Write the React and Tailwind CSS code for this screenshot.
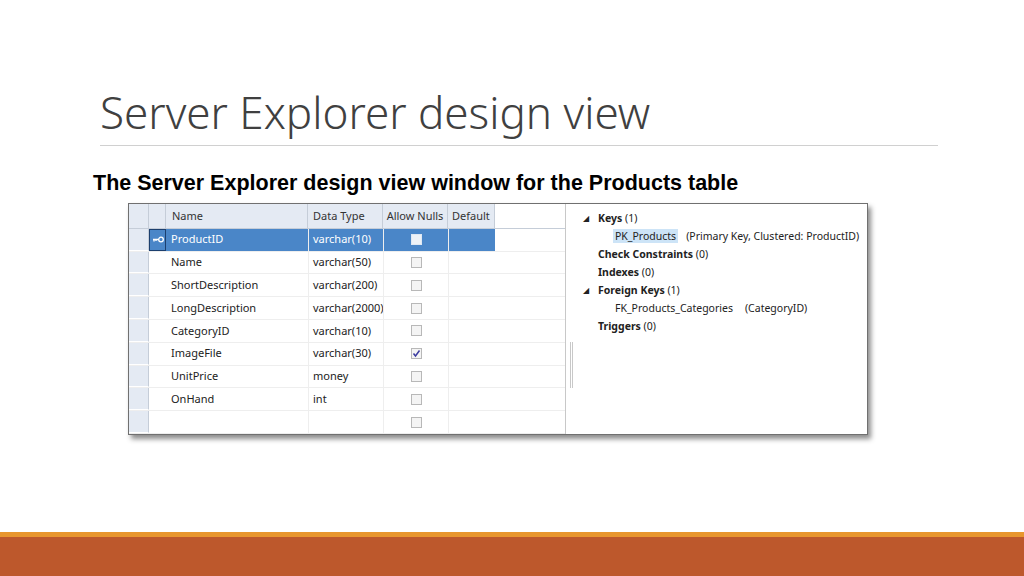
const rows = [
  ["ProductID","varchar(10)",false],
  ["Name","varchar(50)",false],
  ["ShortDescription","varchar(200)",false],
  ["LongDescription","varchar(2000)",false],
  ["CategoryID","varchar(10)",false],
  ["ImageFile","varchar(30)",true],
  ["UnitPrice","money",false],
  ["OnHand","int",false],
  ["","",false],
];
const seg = "font-['Open_Sans',sans-serif]";
function Box({checked, sel}) {
  return <div className={`w-[11px] h-[11px] border ${sel ? "border-[#dfe8f3] bg-[#eef2f7]" : "border-[#b8b8b8] bg-[#f4f4f4]"} flex items-center justify-center`}>
    {checked && <svg width="9" height="9" viewBox="0 0 9 9"><path d="M1.5 4.5 L3.5 7 L7.5 1.5" stroke="#3b3ba0" strokeWidth="1.5" fill="none"/></svg>}
  </div>;
}
export default function App() {
  return (
    <div className="w-[1024px] h-[576px] bg-white relative overflow-hidden flex flex-col">
      <div className="pl-[100px] pr-[86px] pt-[82px]">
        <div className={`${seg} font-light text-[44px] leading-[60px] text-[#404040]`}>Server Explorer design view</div>
        <div className="h-px bg-[#d0d0d0] mt-[3px]" />
      </div>
      <div className="pl-[93px] mt-[24px] font-['Liberation_Sans','Arial',sans-serif] font-bold text-[21.5px] leading-[26px] text-black" style={{fontFamily: "'Liberation Sans', Arial, sans-serif"}}>The Server Explorer design view window for the Products table</div>
      <div className="ml-[128px] mt-[7px] w-[740px] h-[232px] border border-[#707070] shadow-[3px_4px_5px_rgba(0,0,0,0.45)] flex text-[11px] text-[#222] font-['Noto_Sans',sans-serif]">
        <div className="w-[437px] border-r border-[#c8c8c8] flex flex-col">
          <div className="flex h-[25px] bg-[#e4eaf3] border-b border-[#c5cdd8] text-[#333]">
            <div className="w-[20px] border-r border-[#c5cdd8]" />
            <div className="w-[17px] border-r border-[#c5cdd8]" />
            <div className="w-[142px] border-r border-[#c5cdd8] pl-[6px] flex items-center">Name</div>
            <div className="w-[75px] border-r border-[#c5cdd8] pl-[5px] flex items-center">Data Type</div>
            <div className="w-[65px] border-r border-[#c5cdd8] flex items-center justify-center">Allow Nulls</div>
            <div className="w-[47px] border-r border-[#c5cdd8] pl-[4px] flex items-center">Default</div>
            <div className="flex-1 bg-white" />
          </div>
          {rows.map(([n,t,c],i)=>{
            const sel = i===0;
            return (
              <div key={i} className="flex h-[23px] border-b border-[#eeeeee]">
                <div className="w-[20px] bg-[#e4eaf3] border-r border-[#c5cdd8] border-b border-b-white" />
                <div className={`w-[17px] flex items-center justify-center ${sel ? "bg-[#4a86c8] border border-[#1c3f6e]" : ""}`}>
                  {sel && <svg width="12" height="7" viewBox="0 0 12 7"><circle cx="9" cy="3.5" r="2.3" stroke="white" strokeWidth="1.3" fill="none"/><path d="M1 3.5 H6.7 M2 3.5 V5.5 M4 3.5 V5" stroke="white" strokeWidth="1.3"/></svg>}
                </div>
                <div className={`w-[142px] pl-[5px] flex items-center ${sel ? "bg-[#4a86c8] text-white" : ""}`}>{n}</div>
                <div className={`w-[75px] pl-[4px] flex items-center border-l border-[#eeeeee] whitespace-nowrap ${sel ? "bg-[#4a86c8] text-white" : ""}`}>{t}</div>
                <div className={`w-[65px] flex items-center justify-center border-l border-[#eeeeee] ${sel ? "bg-[#4a86c8]" : ""}`}><Box checked={c} sel={sel} /></div>
                <div className={`w-[47px] border-l border-[#eeeeee] ${sel ? "bg-[#4a86c8]" : ""}`} />
                <div className="flex-1" />
              </div>
            );
          })}
        </div>
        <div className="flex-1 relative pt-[5px] pl-[17px] text-[10.5px] leading-[18px] text-[#222] whitespace-nowrap">
          <div className="absolute left-[4px] top-[138px] w-[3px] h-[46px] border-x border-[#c8c8c8]" />
          <div className="flex items-center"><span className="text-[8px] w-[15px]">◢</span><b>Keys</b>&nbsp;(1)</div>
          <div className="pl-[32px]"><span className="bg-[#cde4f7] px-[2px] -ml-[2px]">PK_Products</span><span className="ml-[8px]">(Primary Key, Clustered: ProductID)</span></div>
          <div className="pl-[15px]"><b>Check Constraints</b> (0)</div>
          <div className="pl-[15px]"><b>Indexes</b> (0)</div>
          <div className="flex items-center"><span className="text-[8px] w-[15px]">◢</span><b>Foreign Keys</b>&nbsp;(1)</div>
          <div className="pl-[32px]">FK_Products_Categories<span className="ml-[12px]">(CategoryID)</span></div>
          <div className="pl-[15px]"><b>Triggers</b> (0)</div>
        </div>
      </div>
      <div className="mt-auto h-[5px] bg-[#e8962e]" />
      <div className="h-[39px] bg-[#bd582c]" />
    </div>
  );
}
